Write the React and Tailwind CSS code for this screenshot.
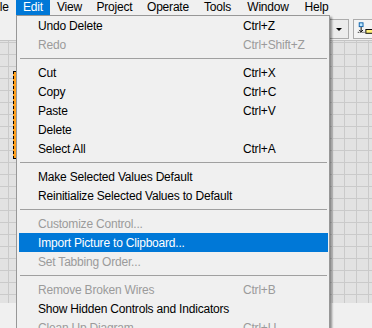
import React from 'react';

const menuBar = [
  { label: 'File', w: 'w-[33px] -ml-[17px]' },
  { label: 'Edit', w: 'w-[34px]', active: true },
  { label: 'View', w: 'w-[39px]' },
  { label: 'Project', w: 'w-[51px]' },
  { label: 'Operate', w: 'w-[56px]' },
  { label: 'Tools', w: 'w-[43px]' },
  { label: 'Window', w: 'w-[58px]' },
  { label: 'Help', w: 'w-[39px]' },
];

// null = separator
const items = [
  { label: 'Undo Delete', key: 'Ctrl+Z' },
  { label: 'Redo', key: 'Ctrl+Shift+Z', disabled: true },
  null,
  { label: 'Cut', key: 'Ctrl+X' },
  { label: 'Copy', key: 'Ctrl+C' },
  { label: 'Paste', key: 'Ctrl+V' },
  { label: 'Delete' },
  { label: 'Select All', key: 'Ctrl+A' },
  null,
  { label: 'Make Selected Values Default' },
  { label: 'Reinitialize Selected Values to Default' },
  null,
  { label: 'Customize Control...', disabled: true },
  { label: 'Import Picture to Clipboard...', hover: true },
  { label: 'Set Tabbing Order...', disabled: true },
  null,
  { label: 'Remove Broken Wires', key: 'Ctrl+B', disabled: true },
  { label: 'Show Hidden Controls and Indicators' },
  { label: 'Clean Up Diagram', key: 'Ctrl+U', disabled: true },
];

function PaletteIcon() {
  return (
    <svg width="20" height="18" viewBox="0 0 20 18">
      <rect x="5.5" y="2.5" width="4" height="4" fill="#bfe8ff" stroke="#0a5fa8" />
      <line x1="7.5" y1="7" x2="7.5" y2="12" stroke="#000" />
      <path d="M5.5 10 L7.5 12 L9.5 10" fill="none" stroke="#000" />
      <line x1="4" y1="12.5" x2="12" y2="12.5" stroke="#000" strokeDasharray="1 1" />
      <rect x="12.5" y="9.5" width="8" height="4" fill="#fff27a" stroke="#000" />
    </svg>
  );
}

export default function App() {
  return (
    <div
      className="relative w-[372px] h-[328px] overflow-hidden bg-[#f0f0f0] text-[12px] tracking-[-0.2px] text-black"
      style={{ fontFamily: '"Liberation Sans", Arial, sans-serif' }}
    >
      {/* menu bar */}
      <div className="flex h-[15px] leading-[15px]">
        {menuBar.map((m) => (
          <div
            key={m.label}
            className={`${m.w} shrink-0 text-center ${m.active ? 'bg-[#0078d7] text-white' : ''}`}
          >
            {m.label}
          </div>
        ))}
      </div>

      {/* toolbar */}
      <div className="flex h-[26px] items-start justify-end gap-[4px] pt-[4px] border-b border-[#c4c4c4]">
        <div className="flex h-[20px] w-[20px] items-center justify-center border border-[#acacac] bg-[#ececec]">
          <div className="h-0 w-0 border-x-[3px] border-t-[3px] border-x-transparent border-t-black" />
        </div>
        <div className="-mr-[2px] flex h-[20px] w-[21px] items-center border border-[#acacac] bg-[#f4f4f4]">
          <PaletteIcon />
        </div>
      </div>

      {/* block diagram canvas */}
      <div className="relative h-[262px] bg-[#e2e2e2] bg-[linear-gradient(to_right,#cacaca_1px,transparent_1px),linear-gradient(to_bottom,#cacaca_1px,transparent_1px)] bg-size-[12px_12px] bg-position-[8px_1px]">
        <div className="absolute left-[13px] top-[30px] h-[88px] w-[10px] border border-dashed border-black bg-[#ff9f1c]" />
      </div>

      {/* Edit dropdown */}
      <div className="absolute left-[16px] top-[15px] w-[314px] border border-[#979797] bg-[#f0f0f0] shadow-[2px_2px_2px_rgba(0,0,0,0.4)]">
        {items.map((it, i) =>
          it === null ? (
            <div key={i} className="flex h-[9px] items-center pl-[3px] pr-[2px]">
              <div className="h-px w-full bg-[#a0a0a0]" />
            </div>
          ) : (
            <div
              key={i}
              className={`ml-[2px] mr-[1px] flex h-[19px] items-center whitespace-nowrap ${
                it.hover ? 'bg-[#0078d7] text-white' : it.disabled ? 'text-[#9b9b9b]' : ''
              }`}
            >
              <span className="w-[224px] shrink-0 pl-[19px]">{it.label}</span>
              {it.key && <span>{it.key}</span>}
            </div>
          )
        )}
      </div>
    </div>
  );
}
